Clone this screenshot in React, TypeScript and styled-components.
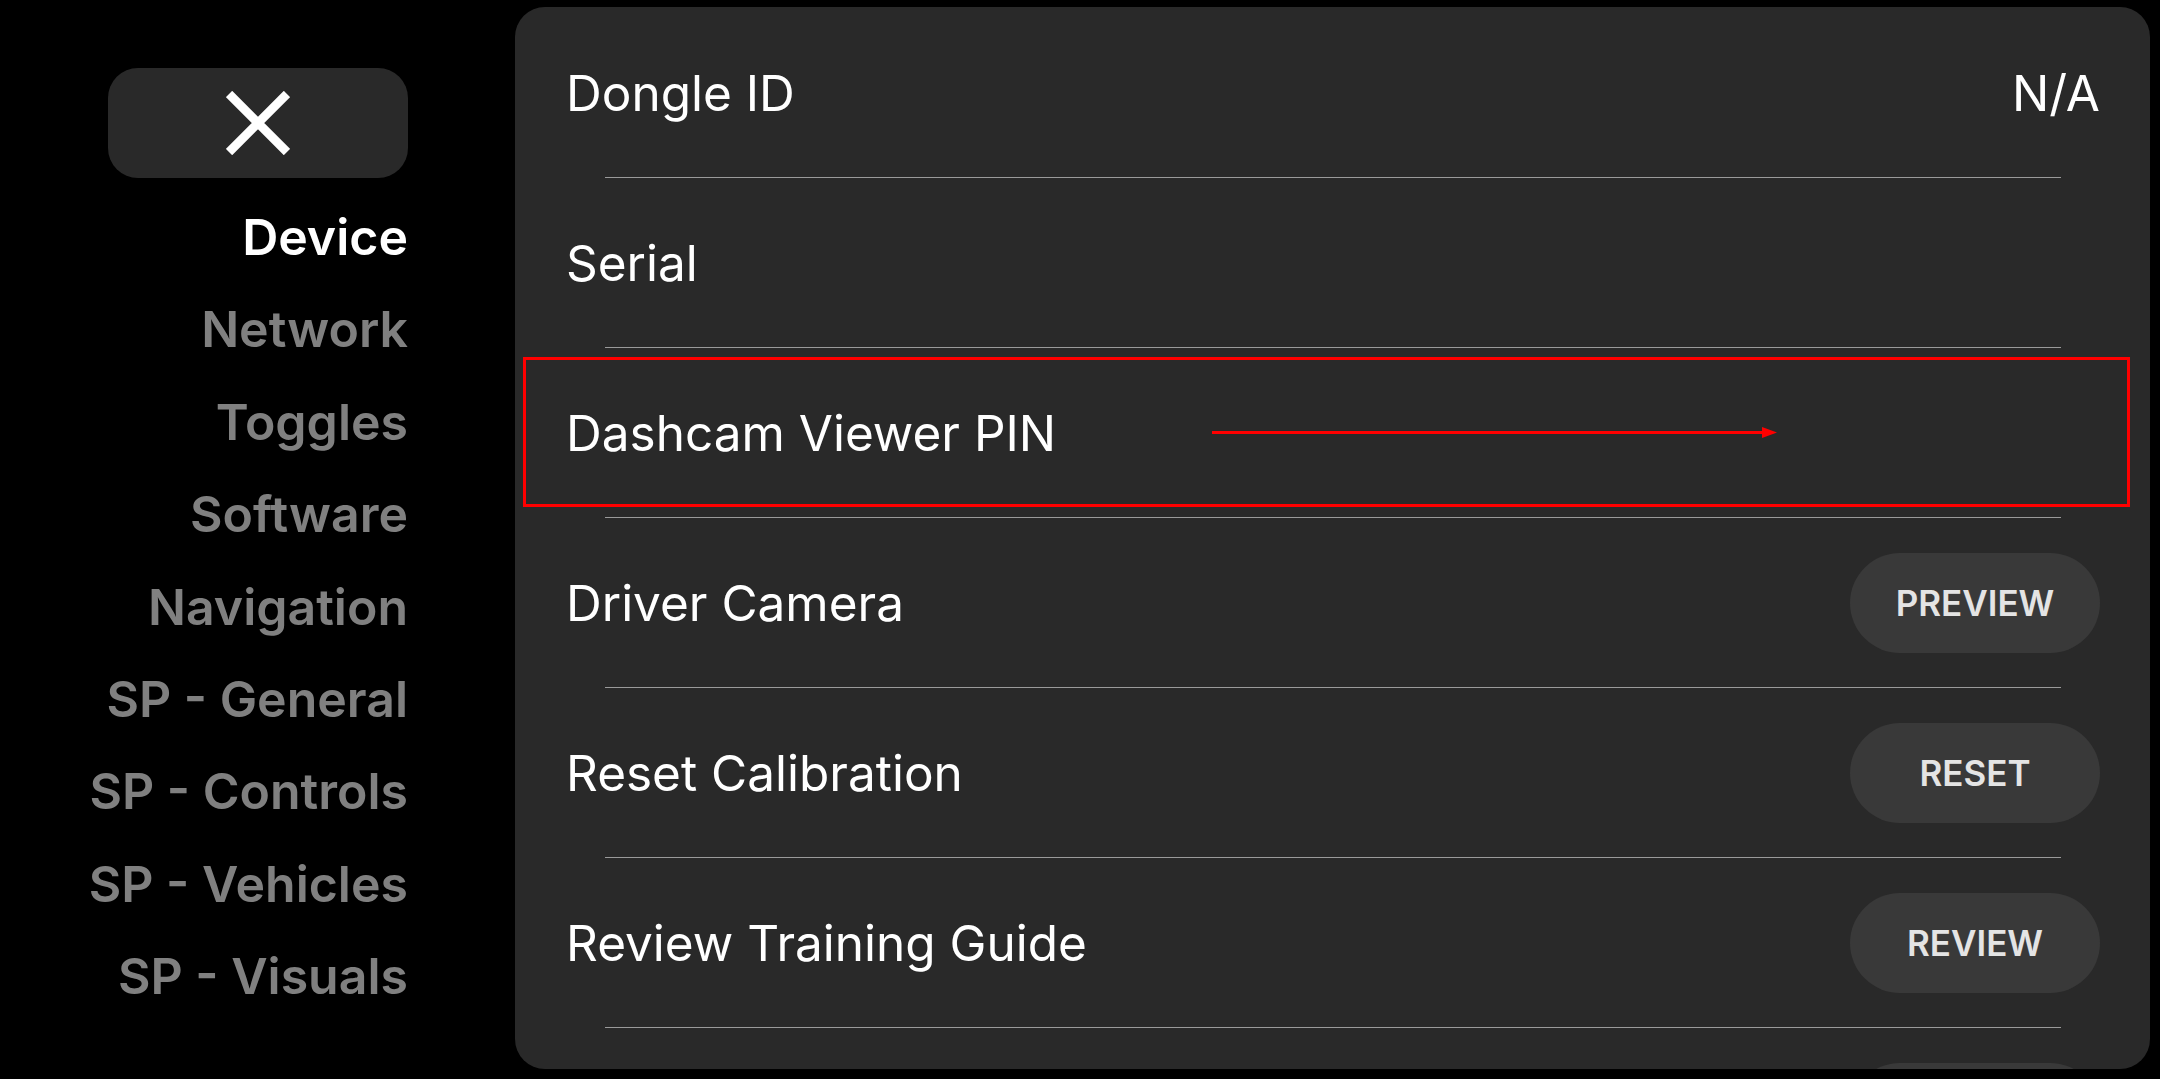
import React from "react";
import styled, { createGlobalStyle } from "styled-components";

const GlobalStyle = createGlobalStyle`
  html, body {
    margin: 0;
    padding: 0;
    background: #000;
  }
  body {
    font-family: "Inter", "Noto Sans", sans-serif;
    color: #fff;
  }
`;

const Screen = styled.div`
  position: relative;
  display: flex;
  width: 2160px;
  height: 1079px;
  overflow: hidden;
  background: #000;
`;

const Sidebar = styled.nav`
  display: flex;
  flex-direction: column;
  align-items: flex-end;
  width: 515px;
  flex-shrink: 0;
  box-sizing: border-box;
  padding: 68px 107px 0 0;
`;

const CloseButton = styled.button`
  display: flex;
  align-items: center;
  justify-content: center;
  width: 300px;
  height: 110px;
  margin-bottom: 13px;
  padding: 0;
  border: none;
  border-radius: 30px;
  background: #292929;
  cursor: pointer;
`;

const NavItem = styled.div<{ $active?: boolean }>`
  font-size: 50px;
  line-height: 92.4px;
  font-weight: 600;
  text-align: right;
  white-space: nowrap;
  color: ${({ $active }) => ($active ? "#ffffff" : "#808080")};
`;

const Panel = styled.main`
  display: flex;
  flex-direction: column;
  width: 1635px;
  height: 1062px;
  margin-top: 7px;
  box-sizing: border-box;
  padding: 1px 50px 0 51px;
  border-radius: 30px;
  background: #292929;
  overflow: hidden;
`;

const Row = styled.div`
  display: flex;
  align-items: center;
  justify-content: space-between;
  flex-shrink: 0;
  height: 169px;
`;

const Label = styled.span`
  font-size: 49.5px;
  font-weight: 400;
  color: #fff;
`;

const Value = styled.span`
  font-size: 49.5px;
  font-weight: 400;
  color: #fff;
`;

const Divider = styled.div`
  flex-shrink: 0;
  height: 1px;
  margin: 0 39px 0 39px;
  background: #9a9a9a;
`;

const PillButton = styled.button`
  width: 250px;
  height: 100px;
  padding: 0;
  border: none;
  border-radius: 50px;
  background: #393939;
  color: #e4e4e4;
  font-family: "Inter", "Noto Sans", sans-serif;
  font-size: 35px;
  font-weight: 600;
  cursor: pointer;
`;

const Annotation = styled.svg`
  position: absolute;
  left: 0;
  top: 0;
  pointer-events: none;
`;

const CloseIcon = () => (
  <svg width="64" height="64" viewBox="0 0 64 64">
    <path d="M3 3 L61 61 M61 3 L3 61" stroke="#fff" strokeWidth="9" fill="none" />
  </svg>
);

const navItems = [
  "Device",
  "Network",
  "Toggles",
  "Software",
  "Navigation",
  "SP - General",
  "SP - Controls",
  "SP - Vehicles",
  "SP - Visuals",
];

interface IItem {
  label?: string;
  value?: string;
  action?: string;
}

const items: IItem[] = [
  { label: "Dongle ID", value: "N/A" },
  { label: "Serial" },
  { label: "Dashcam Viewer PIN" },
  { label: "Driver Camera", action: "PREVIEW" },
  { label: "Reset Calibration", action: "RESET" },
  { label: "Review Training Guide", action: "REVIEW" },
  // next row only peeks in below the fold: just its button's top edge shows
  { action: "" },
];

export default function App() {
  return (
    <>
      <GlobalStyle />
      <Screen>
        <Sidebar>
          <CloseButton aria-label="Close">
            <CloseIcon />
          </CloseButton>
          {navItems.map((name, i) => (
            <NavItem key={name} $active={i === 0}>
              {name}
            </NavItem>
          ))}
        </Sidebar>
        <Panel>
          {items.map((item, i) => (
            <React.Fragment key={i}>
              <Row>
                <Label>{item.label}</Label>
                {item.value ? <Value>{item.value}</Value> : null}
                {item.action !== undefined ? <PillButton>{item.action}</PillButton> : null}
              </Row>
              <Divider />
            </React.Fragment>
          ))}
        </Panel>
        <Annotation width="2160" height="1079" viewBox="0 0 2160 1079">
          <rect x="524.5" y="358.5" width="1604" height="147" fill="none" stroke="#ff0000" strokeWidth="3" />
          <line x1="1212" y1="432.5" x2="1764" y2="432.5" stroke="#ff0000" strokeWidth="3" />
          <polygon points="1762,427 1777,432.5 1762,438" fill="#ff0000" />
        </Annotation>
      </Screen>
    </>
  );
}
